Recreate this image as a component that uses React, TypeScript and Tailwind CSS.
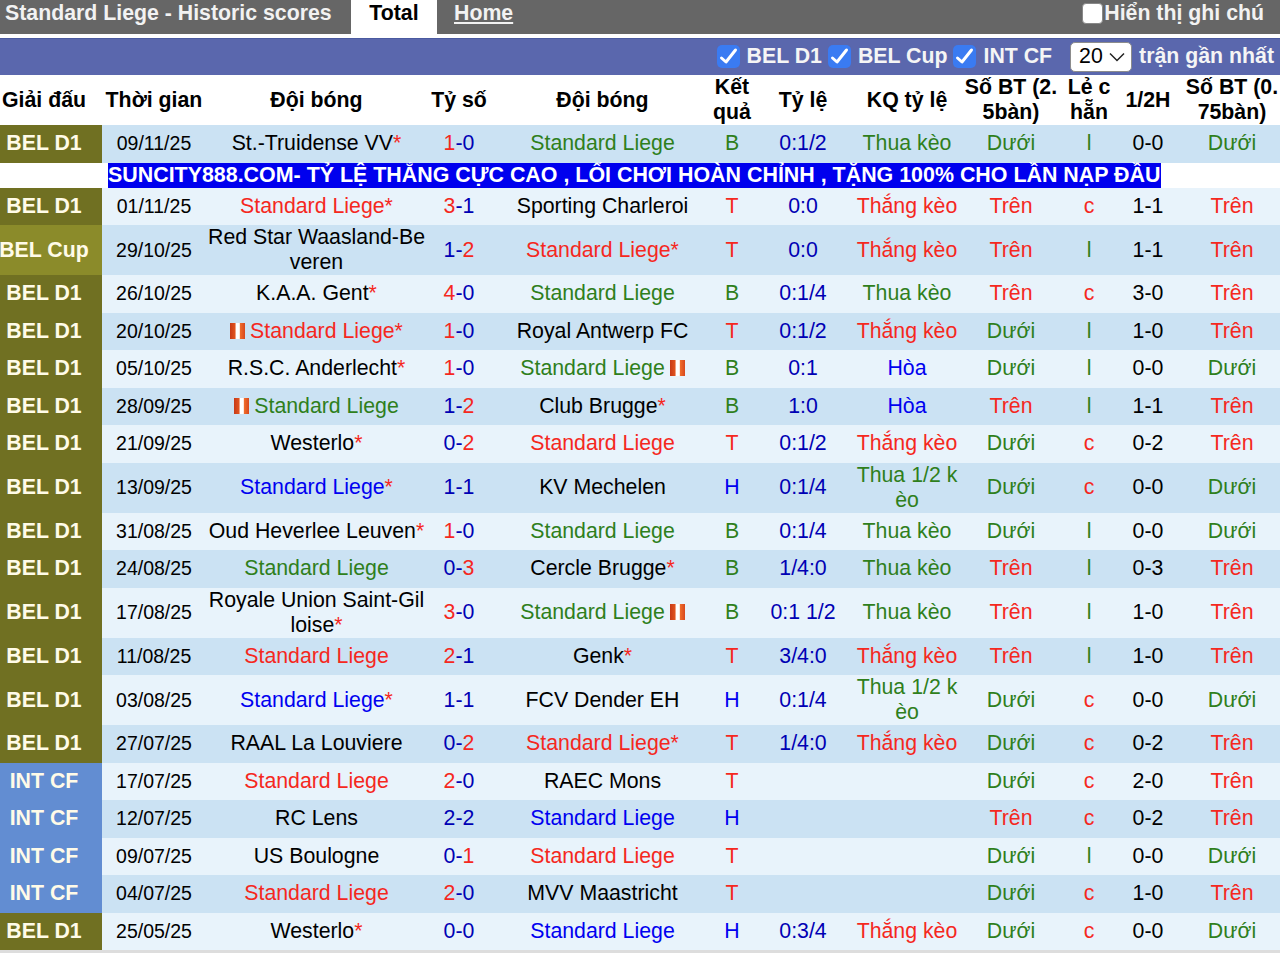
const COLS = "grid grid-cols-[102px_104px_219px_68px_217px_44px_98px_110px_98px_58px_60px_102px]";

const TEAM = "Standard Liege";

type Row = {
  lg: string;
  date: string;
  home: string;
  score: string;
  away: string;
  res: string;
  odds?: string;
  kq?: string;
  bt: string;
  lc: string;
  half: string;
  bt2: string;
  tall?: boolean;
  star?: "home" | "away";
  card?: "home" | "away";
};

const ROWS: Row[] = [
  { lg: "BEL D1", date: "09/11/25", home: "St.-Truidense VV", star: "home", score: "1-0", away: TEAM, res: "B", odds: "0:1/2", kq: "Thua kèo", bt: "Dưới", lc: "l", half: "0-0", bt2: "Dưới" },
  { lg: "BEL D1", date: "01/11/25", home: TEAM, star: "home", score: "3-1", away: "Sporting Charleroi", res: "T", odds: "0:0", kq: "Thắng kèo", bt: "Trên", lc: "c", half: "1-1", bt2: "Trên" },
  { lg: "BEL Cup", date: "29/10/25", home: "Red Star Waasland-Beveren", score: "1-2", away: TEAM, star: "away", res: "T", odds: "0:0", kq: "Thắng kèo", bt: "Trên", lc: "l", half: "1-1", bt2: "Trên", tall: true },
  { lg: "BEL D1", date: "26/10/25", home: "K.A.A. Gent", star: "home", score: "4-0", away: TEAM, res: "B", odds: "0:1/4", kq: "Thua kèo", bt: "Trên", lc: "c", half: "3-0", bt2: "Trên" },
  { lg: "BEL D1", date: "20/10/25", home: TEAM, star: "home", card: "home", score: "1-0", away: "Royal Antwerp FC", res: "T", odds: "0:1/2", kq: "Thắng kèo", bt: "Dưới", lc: "l", half: "1-0", bt2: "Trên" },
  { lg: "BEL D1", date: "05/10/25", home: "R.S.C. Anderlecht", star: "home", score: "1-0", away: TEAM, card: "away", res: "B", odds: "0:1", kq: "Hòa", bt: "Dưới", lc: "l", half: "0-0", bt2: "Dưới" },
  { lg: "BEL D1", date: "28/09/25", home: TEAM, card: "home", score: "1-2", away: "Club Brugge", star: "away", res: "B", odds: "1:0", kq: "Hòa", bt: "Trên", lc: "l", half: "1-1", bt2: "Trên" },
  { lg: "BEL D1", date: "21/09/25", home: "Westerlo", star: "home", score: "0-2", away: TEAM, res: "T", odds: "0:1/2", kq: "Thắng kèo", bt: "Dưới", lc: "c", half: "0-2", bt2: "Trên" },
  { lg: "BEL D1", date: "13/09/25", home: TEAM, star: "home", score: "1-1", away: "KV Mechelen", res: "H", odds: "0:1/4", kq: "Thua 1/2 kèo", bt: "Dưới", lc: "c", half: "0-0", bt2: "Dưới", tall: true },
  { lg: "BEL D1", date: "31/08/25", home: "Oud Heverlee Leuven", star: "home", score: "1-0", away: TEAM, res: "B", odds: "0:1/4", kq: "Thua kèo", bt: "Dưới", lc: "l", half: "0-0", bt2: "Dưới" },
  { lg: "BEL D1", date: "24/08/25", home: TEAM, score: "0-3", away: "Cercle Brugge", star: "away", res: "B", odds: "1/4:0", kq: "Thua kèo", bt: "Trên", lc: "l", half: "0-3", bt2: "Trên" },
  { lg: "BEL D1", date: "17/08/25", home: "Royale Union Saint-Gilloise", star: "home", score: "3-0", away: TEAM, card: "away", res: "B", odds: "0:1 1/2", kq: "Thua kèo", bt: "Trên", lc: "l", half: "1-0", bt2: "Trên", tall: true },
  { lg: "BEL D1", date: "11/08/25", home: TEAM, score: "2-1", away: "Genk", star: "away", res: "T", odds: "3/4:0", kq: "Thắng kèo", bt: "Trên", lc: "l", half: "1-0", bt2: "Trên" },
  { lg: "BEL D1", date: "03/08/25", home: TEAM, star: "home", score: "1-1", away: "FCV Dender EH", res: "H", odds: "0:1/4", kq: "Thua 1/2 kèo", bt: "Dưới", lc: "c", half: "0-0", bt2: "Dưới", tall: true },
  { lg: "BEL D1", date: "27/07/25", home: "RAAL La Louviere", score: "0-2", away: TEAM, star: "away", res: "T", odds: "1/4:0", kq: "Thắng kèo", bt: "Dưới", lc: "c", half: "0-2", bt2: "Trên" },
  { lg: "INT CF", date: "17/07/25", home: TEAM, score: "2-0", away: "RAEC Mons", res: "T", bt: "Dưới", lc: "c", half: "2-0", bt2: "Trên" },
  { lg: "INT CF", date: "12/07/25", home: "RC Lens", score: "2-2", away: TEAM, res: "H", bt: "Trên", lc: "c", half: "0-2", bt2: "Trên" },
  { lg: "INT CF", date: "09/07/25", home: "US Boulogne", score: "0-1", away: TEAM, res: "T", bt: "Dưới", lc: "l", half: "0-0", bt2: "Dưới" },
  { lg: "INT CF", date: "04/07/25", home: TEAM, score: "2-0", away: "MVV Maastricht", res: "T", bt: "Dưới", lc: "c", half: "1-0", bt2: "Trên" },
  { lg: "BEL D1", date: "25/05/25", home: "Westerlo", star: "home", score: "0-0", away: TEAM, res: "H", odds: "0:3/4", kq: "Thắng kèo", bt: "Dưới", lc: "c", half: "0-0", bt2: "Dưới" },
];

const RED = "text-[#f5281e]";
const GREEN = "text-[#2f7f1c]";
const BLUE = "text-[#0000f0]";
const NAVY = "text-[#0000b4]";

const resColor = (r: string) => (r === "T" ? RED : r === "B" ? GREEN : BLUE);
const valColor = (v: string) =>
  v === "Trên" || v === "c" || v.startsWith("Thắng") ? RED : v === "Hòa" ? BLUE : GREEN;

function leagueBg(lg: string) {
  if (lg === "INT CF") return "bg-[#628dd2]";
  if (lg === "BEL Cup") return "bg-[#8b8b2a]";
  return "bg-[#707022]";
}

function RedCard({ className }: { className: string }) {
  return (
    <span
      className={`inline-block h-[16px] w-[15px] bg-[linear-gradient(90deg,#c63a18_0,#e2541f_34%,#ffffff_40%,#ffffff_62%,#ee6a2a_70%,#d8481c_100%)] align-[-1px] ${className}`}
    />
  );
}

function Score({ value }: { value: string }) {
  const [a, b] = value.split("-");
  const aColor = Number(a) > Number(b) ? RED : NAVY;
  const bColor = Number(b) > Number(a) ? RED : NAVY;
  return (
    <div className="text-center">
      <span className={aColor}>{a}</span>
      <span className={NAVY}>-</span>
      <span className={bColor}>{b}</span>
    </div>
  );
}

function HomeTeam({ row }: { row: Row }) {
  const color = row.home === TEAM ? resColor(row.res) : "text-black";
  return (
    <div className={`break-all pl-[2px] text-center ${color}`}>
      {row.card === "home" ? <RedCard className="mr-[5px]" /> : null}
      {row.home}
      {row.star === "home" ? <span className={RED}>*</span> : null}
    </div>
  );
}

function AwayTeam({ row }: { row: Row }) {
  const color = row.away === TEAM ? resColor(row.res) : "text-black";
  return (
    <div className={`break-all pl-[2px] text-center ${color}`}>
      {row.away}
      {row.star === "away" ? <span className={RED}>*</span> : null}
      {row.card === "away" ? <RedCard className="ml-[5px]" /> : null}
    </div>
  );
}

function MatchRow({ row, dark }: { row: Row; dark: boolean }) {
  return (
    <div
      className={`${COLS} items-center ${row.tall ? "h-[50px]" : "h-[37.5px]"} ${dark ? "bg-[#cbe2f3]" : "bg-[#e8f3fb]"}`}
    >
      <div
        className={`flex h-full items-center justify-center whitespace-nowrap pr-[14px] font-bold text-[#fffbe8] ${leagueBg(row.lg)}`}
      >
        {row.lg}
      </div>
      <div className="text-center text-[19.5px] text-black">{row.date}</div>
      <HomeTeam row={row} />
      <Score value={row.score} />
      <AwayTeam row={row} />
      <div className={`text-center ${resColor(row.res)}`}>{row.res}</div>
      <div className={`text-center ${NAVY}`}>{row.odds}</div>
      <div className={`break-all text-center ${row.kq ? valColor(row.kq) : ""}`}>{row.kq}</div>
      <div className={`text-center ${valColor(row.bt)}`}>{row.bt}</div>
      <div className={`text-center ${valColor(row.lc)}`}>{row.lc}</div>
      <div className="text-center text-black">{row.half}</div>
      <div className={`pl-[6px] text-center ${valColor(row.bt2)}`}>{row.bt2}</div>
    </div>
  );
}

function Tick({ label }: { label: string }) {
  return (
    <label className="flex items-center gap-[7px] whitespace-nowrap">
      <span className="flex h-[23px] w-[23px] items-center justify-center rounded-[5px] bg-[#3a7bf2]">
        <svg width="23" height="23" viewBox="0 0 23 23" fill="none" className="text-white">
          <path d="M4.5 13 L9 17 L18.5 5" stroke="currentColor" strokeWidth="3" strokeLinecap="round" strokeLinejoin="round" />
        </svg>
      </span>
      {label}
    </label>
  );
}

export default function App() {
  return (
    <div className="w-[1280px] overflow-hidden bg-white font-['Liberation_Sans',Arial,sans-serif] text-[21.3px] leading-[25px]">
      <div className="flex h-[34px] items-center bg-[#666666] pb-[7px] font-bold text-[#f2f2f2]">
        <div className="w-[351px] pl-[5px] whitespace-nowrap">Standard Liege - Historic scores</div>
        <div className="-mb-[7px] flex h-[34px] w-[86px] items-center justify-center bg-white pb-[7px] text-black">Total</div>
        <a className="ml-[17px] underline">Home</a>
        <div className="ml-auto flex items-center pr-[16px]">
          <span className="h-[21px] w-[21px] rounded-[4px] border border-[#888888] bg-white" />
          <span className="ml-[1px]">Hiển thị ghi chú</span>
        </div>
      </div>
      <div className="mt-[3.5px] flex h-[37.5px] items-center justify-end gap-[6px] border-t border-[#4a5aa0] bg-[#5a67ad] pr-[6px] font-bold text-[#f5f5f5]">
        <Tick label="BEL D1" />
        <Tick label="BEL Cup" />
        <Tick label="INT CF" />
        <div className="ml-[12px] flex h-[30px] w-[62px] items-center justify-between rounded-[5px] border-[1.5px] border-[#8c8c8c] bg-white pl-[8px] pr-[6px] font-normal text-black">
          20
          <svg width="16" height="10" viewBox="0 0 16 10" fill="none" className="text-[#222222]">
            <path d="M1 1.5 L8 8.5 L15 1.5" stroke="currentColor" strokeWidth="1.5" />
          </svg>
        </div>
        <span className="ml-[1px] whitespace-nowrap">trận gần nhất</span>
      </div>
      <div className={`${COLS} h-[50px] items-center bg-white text-center font-bold text-black`}>
        <div className="whitespace-nowrap pr-[14px]">Giải đấu</div>
        <div className="whitespace-nowrap">Thời gian</div>
        <div className="pl-[2px]">Đội bóng</div>
        <div>Tỷ số</div>
        <div className="pl-[2px]">Đội bóng</div>
        <div>Kết quả</div>
        <div>Tỷ lệ</div>
        <div>KQ tỷ lệ</div>
        <div className="break-all">Số BT (2.5bàn)</div>
        <div>Lẻ c hẵn</div>
        <div>1/2H</div>
        <div className="break-all pl-[6px]">Số BT (0.75bàn)</div>
      </div>
      {ROWS.map((row, i) => (
        <div key={row.date}>
          <MatchRow row={row} dark={i % 2 === 0} />
          {i === 0 ? (
            <div className="h-[25px] bg-white pl-[108px]">
              <div className="w-[1053px] whitespace-nowrap bg-[#0000ee] text-[21.42px] font-bold text-white">
                SUNCITY888.COM- TỶ LỆ THẮNG CỰC CAO , LỐI CHƠI HOÀN CHỈNH , TẶNG 100% CHO LẦN NẠP ĐẦU
              </div>
            </div>
          ) : null}
        </div>
      ))}
      <div className="h-[3px] bg-[#dddddd]" />
    </div>
  );
}
